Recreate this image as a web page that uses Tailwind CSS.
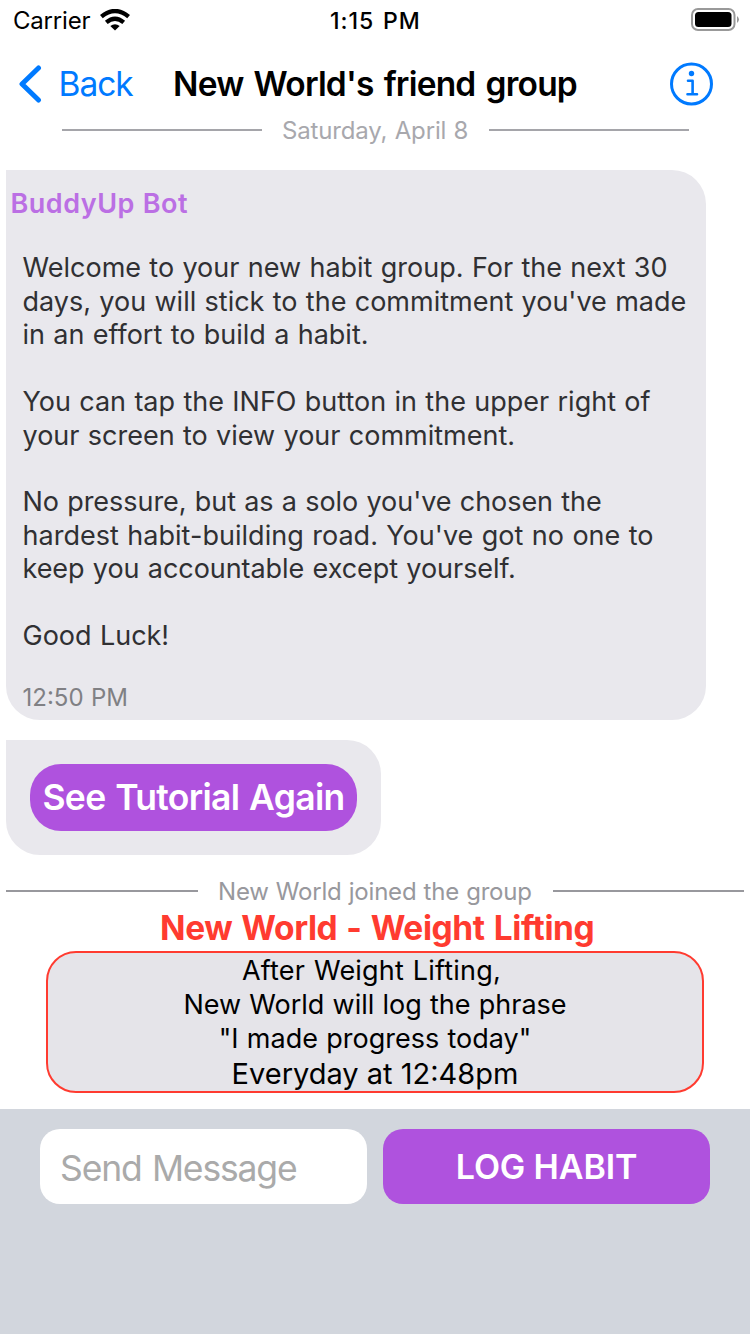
<!DOCTYPE html>
<html lang="en"><head><meta charset="utf-8"><title>New World's friend group</title>
<script src="https://cdn.jsdelivr.net/npm/@tailwindcss/browser@4"></script></head>
<body class="w-[750px] h-[1334px] bg-white overflow-hidden font-['Inter',sans-serif] text-black flex flex-col whitespace-nowrap">
<header class="h-[40px] shrink-0 flex items-center pl-[13px]">
<span class="text-[24px] leading-[40px] w-[87px] pt-px tracking-[-0.2px]">Carrier</span>
<svg class="shrink-0" width="30" height="22" viewBox="0 0 30 22" fill="none" stroke="#000" stroke-width="4.300"><path d="M1.400 7.600Q15 -3.600 28.600 7.600M6.300 13.300Q15 6 23.700 13.300"/><path d="M15 21.500L10.300 17Q15 13.500 19.700 17Z" fill="#000" stroke="none"/></svg>
<span class="w-[361px] pl-[200px] pt-px text-[23px] font-medium leading-[40px] tracking-[1px] [word-spacing:1.5px]">1:15 PM</span>
<svg class="ml-[200px] shrink-0" width="49" height="24" viewBox="0 0 49 24"><rect x="1" y="1" width="42.500" height="21" rx="6" fill="none" stroke="#999" stroke-width="2"/><rect x="4" y="4" width="36.500" height="15" rx="3.500"/><path d="M46 8q4 3.500 0 7z" fill="#999"/></svg>
</header>
<nav class="h-[78px] shrink-0 flex items-center pt-[10px] pl-[18px]">
<svg width="24" height="40" viewBox="0 0 24 40" fill="none" stroke="#007aff" stroke-width="5" stroke-linecap="round" stroke-linejoin="round"><path d="M20.500 4L4 20L20.500 36"/></svg>
<span class="ml-[16.500px] w-[74.500px] pt-px text-[33.5px] text-[#007aff] tracking-[-1px]">Back</span>
<h1 class="ml-[40px] w-[404px] pt-px text-[33.5px] font-semibold tracking-[-0.8px] [word-spacing:2.5px]">New World's friend group</h1>
<svg class="ml-[93px] shrink-0" width="44" height="44" viewBox="0 0 44 44" fill="none" stroke="#007aff" stroke-width="3"><circle cx="21.500" cy="22" r="20"/><circle cx="21.500" cy="11.500" r="2.700" fill="#007aff" stroke="none"/><path d="M18 18.700H22.600V32M17.500 32.300H27" stroke-width="2.600" stroke-linecap="round" stroke-linejoin="round"/></svg>
</nav>
<main class="h-[991px] shrink-0 flex flex-col">
<div class="h-[24px] pl-[62px] flex items-center"><i class="w-[200px] h-[2px] bg-[#a5a5aa]"></i><span class="w-[227px] pl-[20px] pt-px text-[24px] leading-[24px] tracking-[-0.15px] [word-spacing:0.7px] text-[#a8a8ad]">Saturday, April 8</span><i class="w-[200px] h-[2px] bg-[#a5a5aa]"></i></div>
<article class="mt-[28px] ml-[6px] w-[700px] h-[550px] bg-[#e9e8ed] rounded-[34px] rounded-tl-none pt-[17px]">
<h2 class="pl-[4.500px] h-[34px] leading-[34px] text-[27px] font-semibold tracking-[0.5px] [word-spacing:0.5px] text-[#bb6fe4]">BuddyUp Bot</h2>
<div class="mt-[30px] pl-[16.500px] text-[27px] leading-[33.5px] [word-spacing:0.75px] text-[#303033]">
<p>Welcome to your new habit group. For the next 30<br>days, you will stick to the commitment you've made<br>in an effort to build a habit.</p>
<p class="mt-[33.5px]">You can tap the INFO button in the upper right of<br>your screen to view your commitment.</p>
<p class="mt-[33px]"><span class="tracking-[-0.05px]">No pressure, but as a solo you've chosen the</span><br><span class="tracking-[0.03px]">hardest habit-building road. You've got no one to</span><br><span class="tracking-[-0.05px]">keep you accountable except yourself.</span></p>
<p class="mt-[33.5px]">Good Luck!</p>
</div>
<time class="block pl-[16.500px] mt-[30.500px] text-[24px] leading-[30px] [word-spacing:0.7px] text-[#808084]">12:50 PM</time>
</article>
<section class="mt-[20px] ml-[6px] w-[375px] h-[115px] bg-[#e9e8ed] rounded-[34px] rounded-tl-none p-[24px]">
<button class="w-[327px] h-[67px] rounded-[31px] bg-[#af52de] text-white font-semibold text-[35.500px] tracking-[-0.7px] [word-spacing:1.500px]">See Tutorial Again</button>
</section>
<div class="mt-[24px] h-[24px] pl-[6px] flex items-center"><i class="w-[192px] h-[2px] bg-[#98989d]"></i><span class="w-[355px] pl-[20px] pt-[2px] text-[24px] leading-[24px] tracking-[-0.2px] [word-spacing:0.6px] text-[#98989d]">New World joined the group</span><i class="w-[191px] h-[2px] bg-[#98989d]"></i></div>
<h3 class="pl-[160px] h-[48px] leading-[50px] text-[33.500px] font-bold tracking-[-0.4px] [word-spacing:1.500px] text-[#ff3b30]">New World - Weight Lifting</h3>
<div class="ml-[46px] w-[658px] h-[142px] pt-px bg-[#e5e4e9] border-2 border-[#ff3b30] rounded-[30px] text-[27px] leading-[34px] text-center flex flex-col items-center">
<span class="mr-[7px] tracking-[0.2px] [word-spacing:1px]">After Weight Lifting,</span><span class="[word-spacing:0.6px]">New World will log the phrase</span><span class="[word-spacing:0.7px]">"I made progress today"</span><span class="text-[29px] leading-[36px]">Everyday at 12:48pm</span>
</div>
</main>
<footer class="h-[225px] shrink-0 bg-[#d2d6dd] flex pt-[20px] pl-[40px] gap-[16px]">
<div class="w-[327px] h-[75px] rounded-[20px] bg-white pl-[20px] pt-[2px] leading-[75px] text-[35.500px] tracking-[-1.150px] [word-spacing:1.500px] text-[#aaa]">Send Message</div>
<button class="w-[327px] h-[75px] rounded-[20px] bg-[#af52de] text-white text-[34px] font-semibold tracking-[-0.150px]">LOG HABIT</button>
</footer>
</body></html>
